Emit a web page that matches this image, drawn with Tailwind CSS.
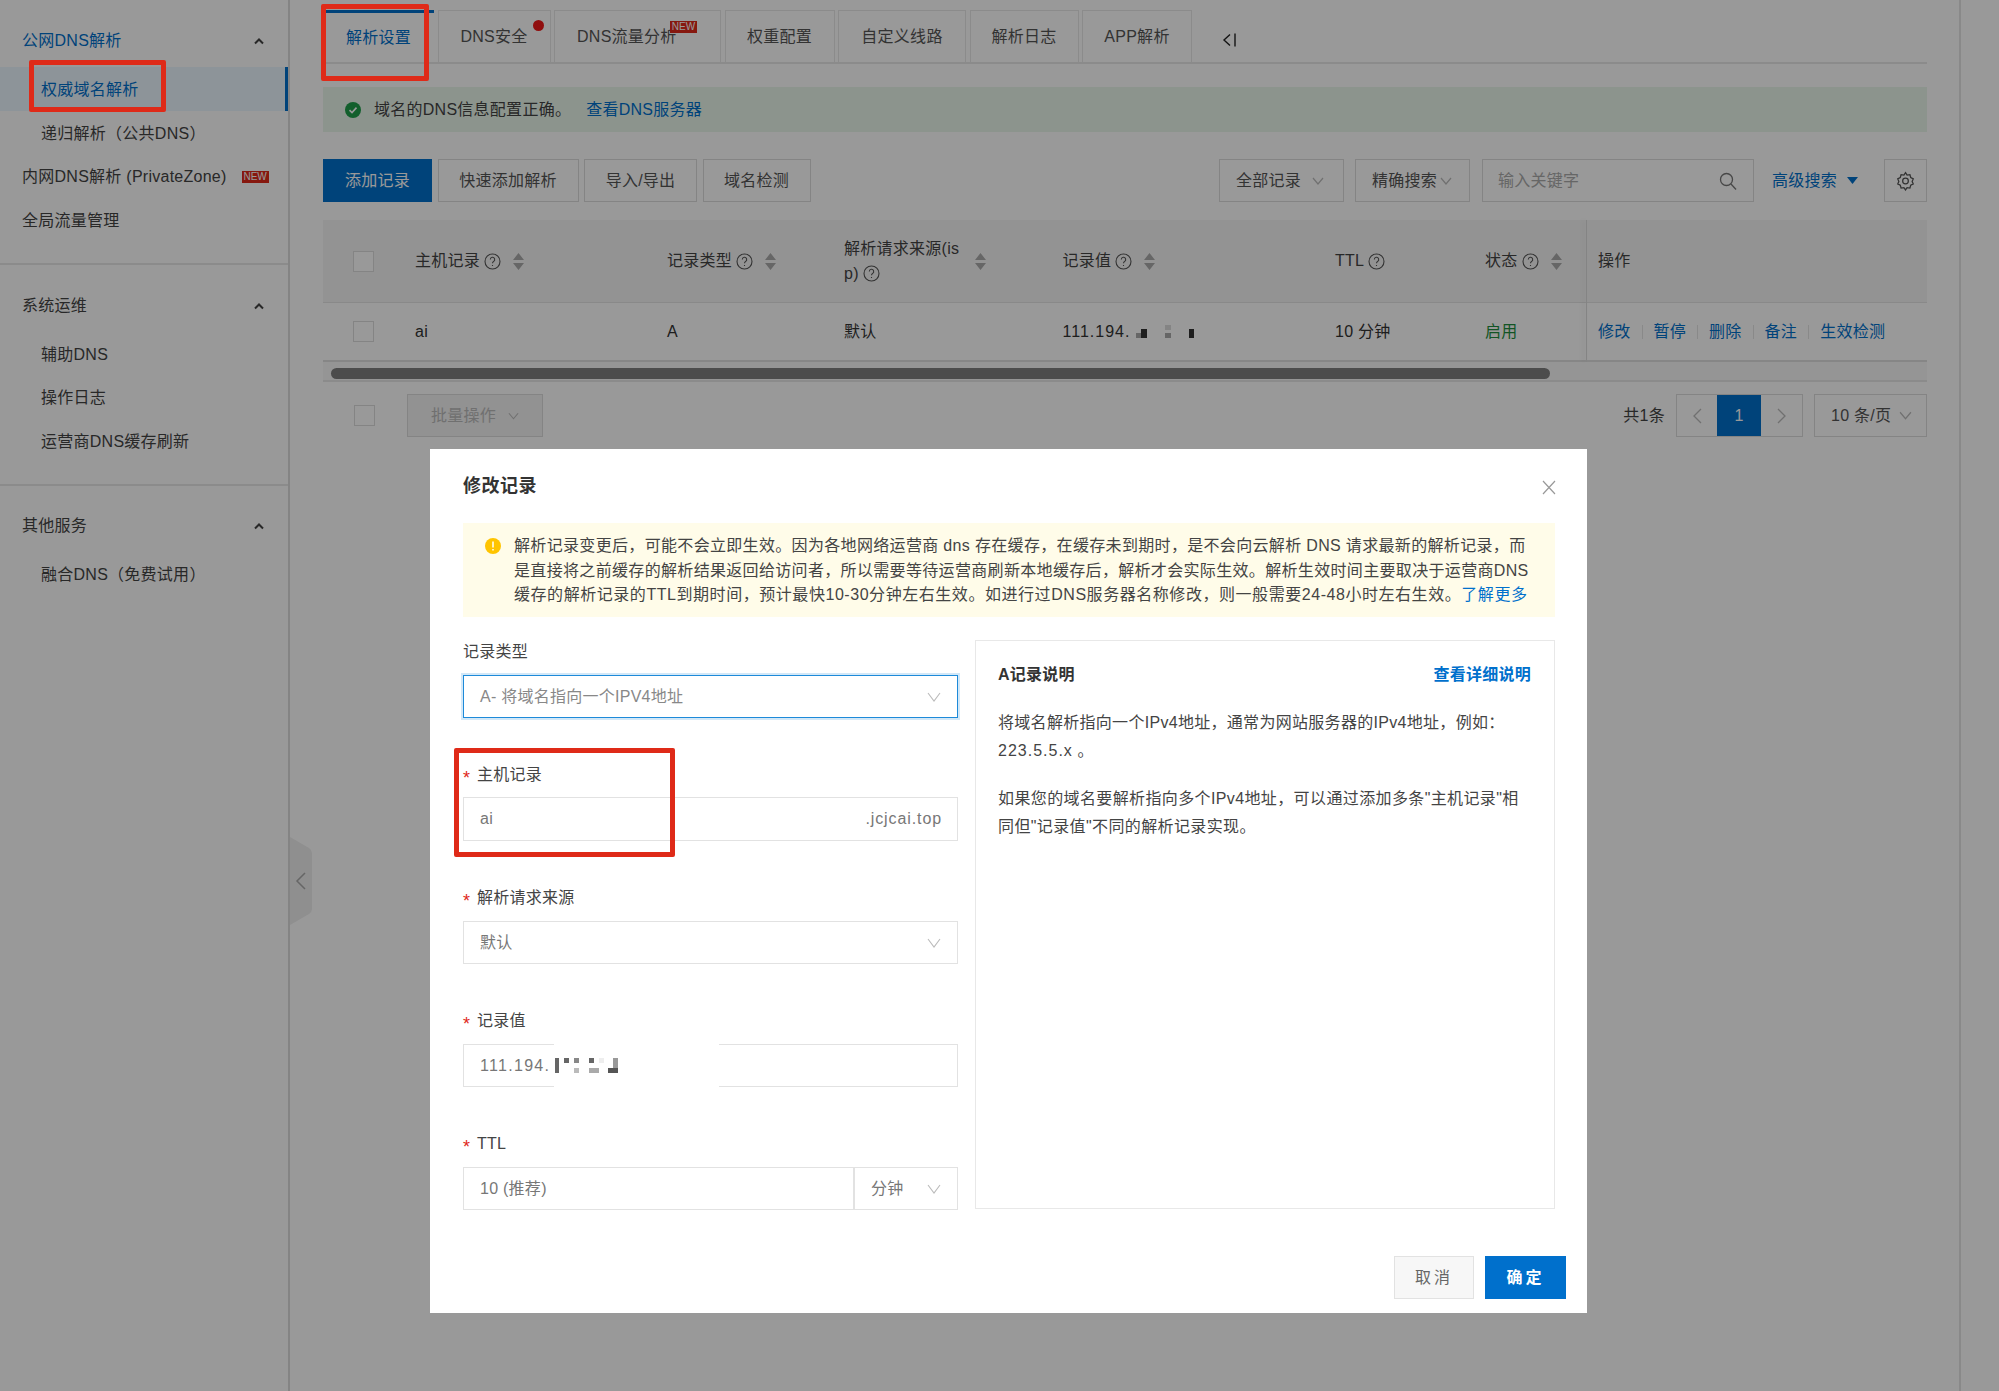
<!DOCTYPE html>
<html lang="zh-CN">
<head>
<meta charset="utf-8">
<script src="https://cdn.jsdelivr.net/npm/@tailwindcss/browser@4"></script>
<title>修改记录</title>
</head>
<body>
<div class="relative flex w-[1999px] h-[1391px] overflow-hidden bg-white text-[16px] tracking-[0.26px] text-[#444] font-['Liberation_Sans','Noto_Sans_CJK_SC',sans-serif]">

  <!-- sidebar -->
  <aside class="w-[290px] shrink-0 border-r-2 border-[#dcdcdc] pt-[19px]">
    <div class="pb-[20px] border-b-2 border-[#e8e8e8]">
      <div class="h-[44px] flex items-center justify-between pl-[22px] pr-[23px] text-[#0070cc]"><span>公网DNS解析</span>
        <svg class="w-[12px] h-[8px] text-[#444]" viewBox="0 0 12 8" fill="none" stroke="currentColor" stroke-width="2"><path d="M2 6.5 6 2.5l4 4"/></svg></div>
      <div class="mt-[4px] h-[44px] flex items-center pl-[41px] pt-[1px] bg-[#ebf7ff] border-r-[3px] border-[#0070cc] text-[#0070cc]">权威域名解析</div>
      <div class="h-[44px] flex items-center pl-[41px] pt-[1px]">递归解析（公共DNS）</div>
      <div class="h-[44px] flex items-center pl-[22px]"><span>内网DNS解析 (PrivateZone)</span><span class="ml-[15px] w-[27px] h-[12px] flex items-center justify-center bg-[#e0281a] text-white text-[10px] tracking-normal leading-none">NEW</span></div>
      <div class="h-[44px] flex items-center pl-[22px]">全局流量管理</div>
    </div>
    <div class="pt-[19px] pb-[20px] border-b-2 border-[#e8e8e8]">
      <div class="h-[44px] flex items-center justify-between pl-[22px] pr-[23px]"><span>系统运维</span>
        <svg class="w-[12px] h-[8px]" viewBox="0 0 12 8" fill="none" stroke="currentColor" stroke-width="2"><path d="M2 6.5 6 2.5l4 4"/></svg></div>
      <div class="mt-[4px] h-[44px] flex items-center pl-[41px] pt-[1px]">辅助DNS</div>
      <div class="h-[44px] flex items-center pl-[41px]">操作日志</div>
      <div class="h-[44px] flex items-center pl-[41px]">运营商DNS缓存刷新</div>
    </div>
    <div class="pt-[18px]">
      <div class="h-[44px] flex items-center justify-between pl-[22px] pr-[23px]"><span>其他服务</span>
        <svg class="w-[12px] h-[8px]" viewBox="0 0 12 8" fill="none" stroke="currentColor" stroke-width="2"><path d="M2 6.5 6 2.5l4 4"/></svg></div>
      <div class="mt-[5px] h-[44px] flex items-center pl-[41px]">融合DNS（免费试用）</div>
    </div>
  </aside>
  <!-- sidebar collapse handle -->
  <svg class="absolute left-[290px] top-[837px] w-[22px] h-[88px]" viewBox="0 0 22 88"><path d="M0 0 19 11q3 2 3 5v56q0 3-3 5L0 88z" fill="#efefef"/><path d="M15 36 7 44l8 8" fill="none" stroke="#aaa" stroke-width="1.5"/></svg>

  <!-- main -->
  <main class="w-[1671px] shrink-0 border-r-2 border-[#e4e4e4] pl-[33px] pr-[32px] pt-[10px]">
    <!-- tabs -->
    <div class="h-[54px] flex gap-[3.5px] pl-[3px] border-b-2 border-[#e8e8e8] text-[#555]">
      <div class="w-[108px] flex items-center justify-center bg-white border-t-[3px] border-[#0070cc] text-[#0070cc] pr-[3px]">解析设置</div>
      <div class="relative w-[113px] flex items-center justify-center border-[1.5px] border-b-0 border-[#e8e8e8]">DNS安全<span class="absolute right-[6px] top-[9px] w-[11px] h-[11px] rounded-full bg-[#f01818]"></span></div>
      <div class="relative w-[167px] flex items-center pl-[22px] border-[1.5px] border-b-0 border-[#e8e8e8]">DNS流量分析<span class="absolute left-[115px] top-[10px] w-[27px] h-[12px] flex items-center justify-center bg-[#e0281a] text-white text-[10px] tracking-normal leading-none">NEW</span></div>
      <div class="w-[110px] flex items-center justify-center border-[1.5px] border-b-0 border-[#e8e8e8]">权重配置</div>
      <div class="w-[128px] flex items-center justify-center border-[1.5px] border-b-0 border-[#e8e8e8]">自定义线路</div>
      <div class="w-[109px] flex items-center justify-center border-[1.5px] border-b-0 border-[#e8e8e8]">解析日志</div>
      <div class="w-[110px] flex items-center justify-center border-[1.5px] border-b-0 border-[#e8e8e8]">APP解析</div>
      <svg class="ml-[26px] mt-[23px] w-[15px] h-[14px] text-[#222]" viewBox="0 0 15 14" fill="none" stroke="currentColor" stroke-width="1.4"><path d="M8 1.5 2 7l6 5.5M13 0.5v13"/></svg>
    </div>

    <!-- success bar -->
    <div class="mt-[23px] h-[45px] flex items-center pl-[22px] bg-[#eaf7ec]">
      <svg class="w-[16px] h-[16px] shrink-0" viewBox="0 0 16 16"><circle cx="8" cy="8" r="8" fill="#1e9e4a"/><path d="M4.5 8.2 7 10.6l4.5-5" fill="none" stroke="#fff" stroke-width="1.6"/></svg>
      <span class="ml-[13px]">域名的DNS信息配置正确。</span>
      <span class="ml-[15px] text-[#0070cc]">查看DNS服务器</span>
    </div>

    <!-- toolbar -->
    <div class="mt-[27px] h-[43px] flex justify-between">
      <div class="flex gap-[5.5px] text-[#555]">
        <div class="w-[109px] flex items-center justify-center bg-[#0070cc] text-white">添加记录</div>
        <div class="w-[141px] flex items-center justify-center border-[1.5px] border-[#dcdcdc]">快速添加解析</div>
        <div class="w-[113px] flex items-center justify-center border-[1.5px] border-[#dcdcdc]">导入/导出</div>
        <div class="w-[108px] flex items-center justify-center border-[1.5px] border-[#dcdcdc]">域名检测</div>
      </div>
      <div class="flex items-stretch text-[#555]">
        <div class="w-[125px] flex items-center justify-between pl-[16px] pr-[19px] border-[1.5px] border-[#dcdcdc]">全部记录
          <svg class="w-[12px] h-[8px]" viewBox="0 0 12 8" fill="none" stroke="#bbb" stroke-width="1.2"><path d="M1 1l5 6 5-6"/></svg></div>
        <div class="ml-[11px] w-[115px] flex items-center justify-between pl-[16px] pr-[17px] border-[1.5px] border-[#dcdcdc]">精确搜索
          <svg class="w-[12px] h-[8px]" viewBox="0 0 12 8" fill="none" stroke="#bbb" stroke-width="1.2"><path d="M1 1l5 6 5-6"/></svg></div>
        <div class="ml-[12px] w-[272px] flex items-center justify-between pl-[15px] pr-[16px] border-[1.5px] border-[#dcdcdc] text-[#aaa]">输入关键字
          <svg class="w-[18px] h-[18px]" viewBox="0 0 18 18" fill="none" stroke="#777" stroke-width="1.3"><circle cx="7.5" cy="7.5" r="6"/><path d="m12 12 5 5.5"/></svg></div>
        <div class="ml-[18px] flex items-center text-[#0070cc]">高级搜索
          <svg class="ml-[10px] w-[11px] h-[7px]" viewBox="0 0 11 7"><path d="M0 0h11L5.500 7z" fill="#0070cc"/></svg></div>
        <div class="ml-[26px] w-[43px] flex items-center justify-center border-[1.5px] border-[#dcdcdc]">
          <svg class="w-[19px] h-[20px]" viewBox="0 0 24 24" fill="none" stroke="#555" stroke-width="1.6"><path d="M12 1.500 14 4.600l3.600-.5 1 3.500 3.200 1.700-1.400 3.200 1.400 3.200-3.200 1.700-1 3.500-3.600-.5-2 2.900-2-2.900-3.600.5-1-3.500-3.200-1.700 1.400-3.200-1.400-3.200 3.200-1.700 1-3.500 3.600.5z"/><circle cx="12" cy="12" r="3.600"/></svg></div>
      </div>
    </div>

    <!-- table -->
    <div class="relative mt-[18px]">
      <div class="h-[83px] grid grid-cols-[92px_252px_177px_218.5px_272.5px_150px_113px_329px] items-center bg-[#f6f6f6] border-b-[1.5px] border-[#e4e4e4] text-[#444]">
        <div class="pl-[30px]"><div class="w-[21px] h-[21px] bg-white border-[1.5px] border-[#dcdcdc]"></div></div>
        <div class="flex items-center">主机记录
          <svg class="ml-[4px] w-[17px] h-[17px]" viewBox="0 0 17 17" fill="none" stroke="#555" stroke-width="1.1"><circle cx="8.500" cy="8.500" r="7.500"/><path d="M6.300 6.500a2.200 2.200 0 1 1 3.300 1.900c-.7.4-1.100.9-1.100 1.800M8.500 12v1"/></svg>
          <svg class="ml-[12px] w-[11px] h-[17px]" viewBox="0 0 11 17" fill="#aaa"><path d="M5.500 0 11 7H0zM0 10h11l-5.500 7z"/></svg></div>
        <div class="flex items-center">记录类型
          <svg class="ml-[4px] w-[17px] h-[17px]" viewBox="0 0 17 17" fill="none" stroke="#555" stroke-width="1.1"><circle cx="8.500" cy="8.500" r="7.500"/><path d="M6.300 6.500a2.200 2.200 0 1 1 3.300 1.900c-.7.4-1.100.9-1.100 1.800M8.500 12v1"/></svg>
          <svg class="ml-[12px] w-[11px] h-[17px]" viewBox="0 0 11 17" fill="#aaa"><path d="M5.500 0 11 7H0zM0 10h11l-5.500 7z"/></svg></div>
        <div class="flex items-center">
          <div class="w-[119px] leading-[25px] break-all">解析请求来源(is p)<svg class="inline ml-[4px] w-[17px] h-[17px] align-[-3px]" viewBox="0 0 17 17" fill="none" stroke="#555" stroke-width="1.1"><circle cx="8.500" cy="8.500" r="7.500"/><path d="M6.300 6.500a2.200 2.200 0 1 1 3.300 1.900c-.7.4-1.100.9-1.100 1.800M8.500 12v1"/></svg></div>
          <svg class="ml-[12px] w-[11px] h-[17px]" viewBox="0 0 11 17" fill="#aaa"><path d="M5.500 0 11 7H0zM0 10h11l-5.500 7z"/></svg></div>
        <div class="flex items-center">记录值
          <svg class="ml-[4px] w-[17px] h-[17px]" viewBox="0 0 17 17" fill="none" stroke="#555" stroke-width="1.1"><circle cx="8.500" cy="8.500" r="7.500"/><path d="M6.300 6.500a2.200 2.200 0 1 1 3.300 1.900c-.7.4-1.100.9-1.100 1.800M8.500 12v1"/></svg>
          <svg class="ml-[12px] w-[11px] h-[17px]" viewBox="0 0 11 17" fill="#aaa"><path d="M5.500 0 11 7H0zM0 10h11l-5.500 7z"/></svg></div>
        <div class="flex items-center">TTL
          <svg class="ml-[4px] w-[17px] h-[17px]" viewBox="0 0 17 17" fill="none" stroke="#555" stroke-width="1.1"><circle cx="8.500" cy="8.500" r="7.500"/><path d="M6.300 6.500a2.200 2.200 0 1 1 3.300 1.900c-.7.4-1.100.9-1.100 1.800M8.500 12v1"/></svg></div>
        <div class="flex items-center">状态
          <svg class="ml-[4px] w-[17px] h-[17px]" viewBox="0 0 17 17" fill="none" stroke="#555" stroke-width="1.1"><circle cx="8.500" cy="8.500" r="7.500"/><path d="M6.300 6.500a2.200 2.200 0 1 1 3.300 1.900c-.7.4-1.100.9-1.100 1.800M8.500 12v1"/></svg>
          <svg class="ml-[12px] w-[11px] h-[17px]" viewBox="0 0 11 17" fill="#aaa"><path d="M5.500 0 11 7H0zM0 10h11l-5.500 7z"/></svg></div>
        <div>操作</div>
      </div>
      <div class="h-[59px] grid grid-cols-[92px_252px_177px_218.5px_272.5px_150px_113px_329px] items-center border-b-[2px] border-[#e0e0e0] text-[#333]">
        <div class="pl-[30px]"><div class="w-[21px] h-[21px] border-[1.5px] border-[#dcdcdc]"></div></div>
        <div>ai</div>
        <div>A</div>
        <div>默认</div>
        <div class="flex items-center"><span class="tracking-[1px]">111.194.</span><svg class="w-[60px] h-[16px] ml-[6px]" viewBox="0 0 60 16"><rect x="0" y="9" width="5" height="5" fill="#aaa"/><rect x="5" y="5" width="6" height="9" fill="#333"/><rect x="29" y="1" width="6" height="5" fill="#ddd"/><rect x="29" y="9" width="6" height="5" fill="#aaa"/><rect x="53" y="5" width="5" height="9" fill="#333"/></svg></div>
        <div>10 分钟</div>
        <div class="text-[#1e8e3e]">启用</div>
        <div class="flex items-center text-[#0070cc] whitespace-nowrap">修改<span class="mx-[11px] w-px h-[14px] bg-[#e4e4e4]"></span>暂停<span class="mx-[11px] w-px h-[14px] bg-[#e4e4e4]"></span>删除<span class="mx-[11px] w-px h-[14px] bg-[#e4e4e4]"></span>备注<span class="mx-[11px] w-px h-[14px] bg-[#e4e4e4]"></span>生效检测</div>
      </div>
      <div class="absolute left-[1263px] top-0 bottom-0 w-px bg-[#ddd] shadow-[-3px_0_5px_rgba(0,0,0,0.12)]"></div>
    </div>
    <div class="h-[20px] border-b-2 border-[#e8e8e8] bg-[#f9f9f9] flex items-center pt-[4px] pl-[8px]">
      <div class="w-[1219px] h-[11px] rounded-full bg-[#7f7f7f]"></div>
    </div>

    <!-- batch / pagination -->
    <div class="mt-[12px] h-[43px] flex items-center">
      <div class="ml-[31px] w-[21px] h-[21px] border-[1.5px] border-[#dcdcdc]"></div>
      <div class="ml-[32px] w-[136px] h-full flex items-center justify-center gap-[12px] bg-[#f3f3f3] border-[1.5px] border-[#dcdcdc] text-[#bbb]">批量操作
        <svg class="w-[11px] h-[8px]" viewBox="0 0 12 8" fill="none" stroke="#bbb" stroke-width="1.2"><path d="M1 1l5 6 5-6"/></svg></div>
      <div class="ml-auto mr-[11px] text-[#444]">共1条</div>
      <div class="w-[127px] h-full flex border-[1.5px] border-[#dcdcdc]">
        <div class="w-[40px] flex items-center justify-center"><svg class="w-[9px] h-[16px]" viewBox="0 0 9 16" fill="none" stroke="#bbb" stroke-width="1.3"><path d="M8 1 1 8l7 7"/></svg></div>
        <div class="w-[44px] flex items-center justify-center bg-[#0070cc] text-white">1</div>
        <div class="flex-1 flex items-center justify-center"><svg class="w-[9px] h-[16px]" viewBox="0 0 9 16" fill="none" stroke="#bbb" stroke-width="1.3"><path d="m1 1 7 7-7 7"/></svg></div>
      </div>
      <div class="ml-[11px] w-[113px] h-full flex items-center justify-between pl-[16px] pr-[14px] border-[1.5px] border-[#dcdcdc] text-[#555]">10 条/页
        <svg class="w-[13px] h-[9px]" viewBox="0 0 12 8" fill="none" stroke="#bbb" stroke-width="1.1"><path d="M1 1l5 6 5-6"/></svg></div>
    </div>
  </main>

  <!-- mask -->
  <div class="absolute inset-0 bg-black/40"></div>

  <!-- modal -->
  <section class="absolute left-[430px] top-[449px] w-[1157px] h-[864px] bg-white pl-[33px] pr-[32px] text-[#333]">
    <div class="h-[74px] flex items-center justify-between">
      <h2 class="text-[18px] font-semibold text-[#333] pt-[1px] tracking-[0.5px]">修改记录</h2>
      <svg class="mr-[-1px] mt-[2px] w-[14px] h-[15px]" viewBox="0 0 14 15" fill="none" stroke="#999" stroke-width="1.2"><path d="m1 1 12 13M13 1 1 14"/></svg>
    </div>
    <div class="h-[94px] flex bg-[#fffce9] pl-[22px] pt-[11px]">
      <svg class="mt-[4px] w-[16px] h-[16px] shrink-0" viewBox="0 0 16 16"><circle cx="8" cy="8" r="8" fill="#ffc400"/><path d="M8 3.500v6M8 11v1.500" stroke="#fff" stroke-width="1.5"/></svg>
      <p class="ml-[13px] leading-[24.5px] text-[#444] whitespace-nowrap tracking-[0.33px]">解析记录变更后，可能不会立即生效。因为各地网络运营商 dns 存在缓存，在缓存未到期时，是不会向云解析 DNS 请求最新的解析记录，而<br>是直接将之前缓存的解析结果返回给访问者，所以需要等待运营商刷新本地缓存后，解析才会实际生效。解析生效时间主要取决于运营商DNS<br><span class="tracking-[0.55px]">缓存的解析记录的TTL到期时间，预计最快10-30分钟左右生效。如进行过DNS服务器名称修改，则一般需要24-48小时左右生效。</span><span class="text-[#0070cc] tracking-[0.55px]">了解更多</span></p>
    </div>
    <div class="mt-[23px] flex gap-[17px]">
      <!-- form -->
      <div class="w-[495px] shrink-0">
        <div class="h-[24px] flex items-center text-[#444]">记录类型</div>
        <div class="mt-[11px] h-[43px] flex items-center justify-between pl-[16px] pr-[16px] border-[1.5px] border-[#1d8ad9] shadow-[0_0_0_2px_#d2e8f8] text-[#888]">A- 将域名指向一个IPV4地址
          <svg class="w-[14px] h-[10px]" viewBox="0 0 14 10" fill="none" stroke="#bbb" stroke-width="1.1"><path d="m1 1 6 8 6-8"/></svg></div>

        <div class="mt-[45px] h-[24px] flex items-center text-[#444]"><span class="w-[14px] text-[18px] leading-none pt-[5px] text-[#e0281a]">*</span>主机记录</div>
        <div class="mt-[10px] h-[44px] flex items-center justify-between pl-[16px] pr-[15px] border-[1.5px] border-[#e2e2e2] text-[#777]"><span>ai</span><span class="tracking-[0.9px]">.jcjcai.top</span></div>

        <div class="mt-[45px] h-[24px] flex items-center text-[#444]"><span class="w-[14px] text-[18px] leading-none pt-[5px] text-[#e0281a]">*</span>解析请求来源</div>
        <div class="mt-[11px] h-[43px] flex items-center justify-between pl-[16px] pr-[16px] border-[1.5px] border-[#e2e2e2] text-[#777]">默认
          <svg class="w-[14px] h-[10px]" viewBox="0 0 14 10" fill="none" stroke="#bbb" stroke-width="1.1"><path d="m1 1 6 8 6-8"/></svg></div>

        <div class="mt-[45px] h-[24px] flex items-center text-[#444]"><span class="w-[14px] text-[18px] leading-none pt-[5px] text-[#e0281a]">*</span>记录值</div>
        <div class="relative mt-[11px] h-[43px] flex items-center pl-[16px] border-[1.5px] border-[#e2e2e2] text-[#777]">
          <span class="tracking-[1.3px]">111.194.</span>
          <span class="absolute left-[90px] top-[-2px] bottom-[-2px] w-[165px] bg-white"></span>
          <svg class="absolute left-[91px] top-[13px] w-[63px] h-[16px]" viewBox="0 0 63 16"><rect x="0" y="0" width="4" height="15" fill="#666"/><rect x="9" y="0" width="5" height="5" fill="#666"/><rect x="19" y="0" width="5" height="5" fill="#888"/><rect x="19" y="10" width="5" height="5" fill="#bbb"/><rect x="34" y="0" width="5" height="5" fill="#666"/><rect x="34" y="10" width="10" height="5" fill="#aaa"/><rect x="44" y="0" width="5" height="5" fill="#eee"/><rect x="58" y="0" width="5" height="10" fill="#999"/><rect x="53" y="10" width="10" height="5" fill="#555"/></svg>
        </div>

        <div class="mt-[45px] h-[24px] flex items-center text-[#444]"><span class="w-[14px] text-[18px] leading-none pt-[5px] text-[#e0281a]">*</span>TTL</div>
        <div class="mt-[11px] h-[43px] flex border-[1.5px] border-[#e2e2e2] text-[#777]">
          <div class="w-[391px] flex items-center pl-[16px] border-r-2 border-[#e2e2e2]">10 (推荐)</div>
          <div class="flex-1 flex items-center justify-between pl-[16px] pr-[16px]">分钟
            <svg class="w-[14px] h-[10px]" viewBox="0 0 14 10" fill="none" stroke="#bbb" stroke-width="1.1"><path d="m1 1 6 8 6-8"/></svg></div>
        </div>
      </div>
      <!-- doc panel -->
      <div class="w-[580px] h-[569px] border-[1.5px] border-[#e8e8e8] pl-[22px] pr-[23px]">
        <div class="mt-[22px] h-[24px] flex items-center justify-between">
          <span class="font-semibold text-[#333]">A记录说明</span>
          <span class="font-semibold text-[#0070cc]">查看详细说明</span>
        </div>
        <p class="mt-[22px] leading-[28px] text-[#444] whitespace-nowrap tracking-[0.3px]">将域名解析指向一个IPv4地址，通常为网站服务器的IPv4地址，例如：<br><span class="tracking-[1px]">223.5.5.x</span> 。</p>
        <p class="mt-[20px] leading-[28px] text-[#444] whitespace-nowrap tracking-[0.38px]">如果您的域名要解析指向多个IPv4地址，可以通过添加多条"主机记录"相<br>同但"记录值"不同的解析记录实现。</p>
      </div>
    </div>
    <div class="absolute right-[21px] top-[807px] flex gap-[11px]">
      <div class="w-[80px] h-[43px] flex items-center justify-center bg-[#f7f7f7] border-[1.5px] border-[#e2e2e2] text-[#666] tracking-[3px]">取消</div>
      <div class="w-[81px] h-[43px] flex items-center justify-center bg-[#0070cc] text-white tracking-[3px] font-semibold">确定</div>
    </div>
  </section>

  <!-- red annotation boxes -->
  <div class="absolute left-[321px] top-[4px] w-[108px] h-[77px] border-[5px] border-[#df2a18] rounded-[2px]"></div>
  <div class="absolute left-[29px] top-[60px] w-[137px] h-[52px] border-[5px] border-[#df2a18] rounded-[2px]"></div>
  <div class="absolute left-[454px] top-[748px] w-[221px] h-[109px] border-[5px] border-[#df2a18] rounded-[2px]"></div>
</div>
</body>
</html>
